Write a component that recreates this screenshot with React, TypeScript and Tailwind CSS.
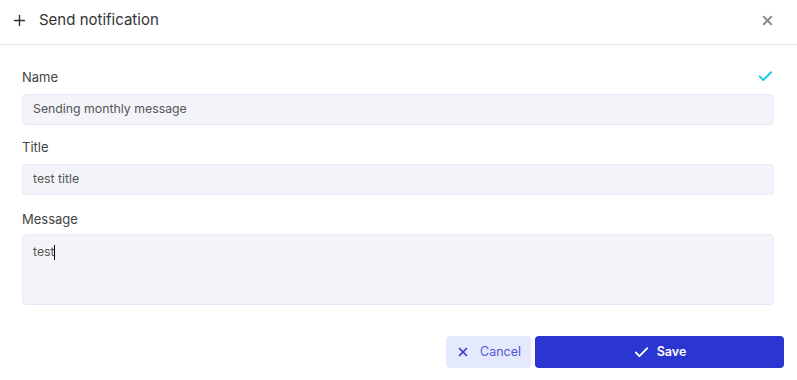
import { Plus, X, Check } from "lucide-react"

const fields = [
    { label: 'Name', value: 'Sending monthly message', valid: true },
    { label: 'Title', value: 'test title', valid: false },
]

export default function App() {
    return (
        <div className="w-[797px] h-[380px] bg-white text-[#333] font-['Inter',sans-serif]">
            {/* Header */}
            <div className="h-[45px] flex items-center border-b border-[#e2e2e2] pl-[11px] pr-[22px] pb-[4px]">
                <Plus size={17} strokeWidth={2} className="text-[#333]" />
                <span className="ml-[11px] text-[15px] text-[#333]">Send notification</span>
                <X size={15} strokeWidth={3} className="ml-auto text-[#8a8a8a]" />
            </div>

            <div className="pl-[22px] pr-[23px] pt-[25px]">
                {fields.map((f, i) => (
                    <div key={i} className="mb-[15px]">
                        <div className="flex items-center justify-between h-[16px] mb-[8px]">
                            <span className="text-[13px] text-[#444]">{f.label}</span>
                            {f.valid && <Check size={17} strokeWidth={2.75} className="text-[#1ec8ea] -mt-[3px]" />}
                        </div>
                        <div className="h-[31px] flex items-center px-[10px] rounded-[4px] bg-[#f3f4fa] border border-[#e5e9f8] text-[12.3px] text-[#555]">
                            {f.value}
                        </div>
                    </div>
                ))}
                <div>
                    <div className="h-[16px] mb-[8px] text-[13px] text-[#444]">Message</div>
                    <div className="h-[71px] px-[10px] pt-[8px] rounded-[4px] bg-[#f3f4fa] border border-[#e5e9f8] text-[12.3px] text-[#555]">
                        test<span className="inline-block w-[1px] h-[15px] bg-black align-middle -ml-[1px]" />
                    </div>
                </div>
            </div>

            {/* Footer */}
            <div className="flex justify-end gap-[4px] pr-[13px] mt-[31px]">
                <button className="w-[85px] h-[32px] flex items-center justify-center gap-[10px] rounded-[4px] bg-[#e5e9fd] text-[#5058d6] text-[12.5px]">
                    <X size={14} strokeWidth={3} className="text-[#3940c9]" />
                    Cancel
                </button>
                <button className="w-[249px] h-[32px] flex items-center justify-center gap-[7px] rounded-[4px] bg-[#2b36d2] text-white text-[12.5px] font-semibold">
                    <Check size={17} strokeWidth={2.5} />
                    Save
                </button>
            </div>
        </div>
    )
}
